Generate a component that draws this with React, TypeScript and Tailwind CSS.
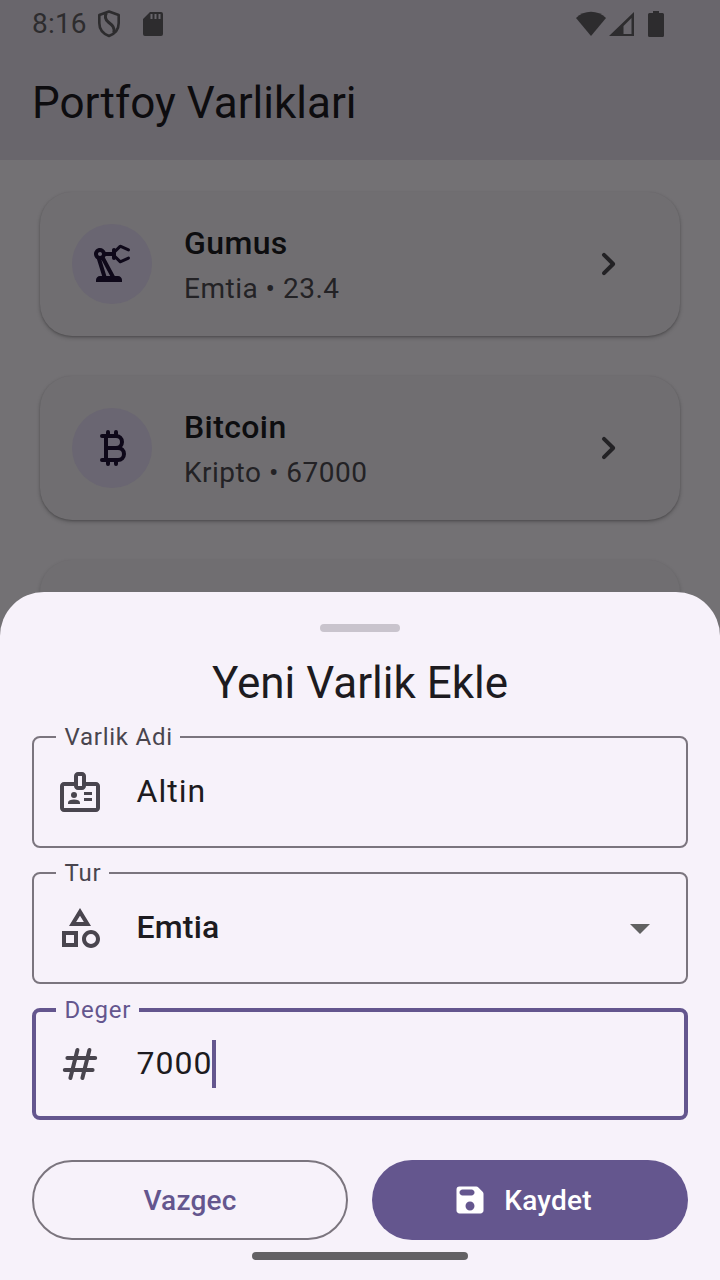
import type { ReactNode } from "react";
import {
  MdArrowDropDown,
  MdOutlineBadge,
  MdOutlineCategory,
  MdOutlinePrecisionManufacturing,
} from "react-icons/md";

function BitcoinIcon() {
  return (
    <svg viewBox="0 0 24 24" className="size-12" fill="none" stroke="currentColor" strokeWidth="2" strokeLinecap="round">
      <path d="M7 6h7a3 3 0 0 1 0 6H9M9 12h6a3 3 0 0 1 0 6H7M9 6v12M10 4v2M14 4v2M10 18v2M14 18v2" />
    </svg>
  );
}

function ChevronIcon() {
  return (
    <svg viewBox="0 0 24 24" className="size-12 text-[#232225]" fill="currentColor">
      <path d="M9.29 15.88 13.17 12 9.29 8.12a.996.996 0 1 1 1.41-1.41l4.59 4.59c.39.39.39 1.02 0 1.41L10.7 17.3a.996.996 0 0 1-1.41 0c-.38-.39-.39-1.03 0-1.42z" />
    </svg>
  );
}

function HashIcon() {
  return (
    <svg viewBox="0 0 24 24" className="size-12" fill="none" stroke="currentColor" strokeWidth="2" strokeLinecap="round">
      <path d="M5.7 9h13.9M4.4 15h13.9M10.7 5 7.2 19M16.7 5l-3.500 14" />
    </svg>
  );
}

function SaveIcon() {
  return (
    <svg viewBox="0 0 24 24" className="size-9" fill="currentColor">
      <path d="M17.59 3.59c-.38-.38-.89-.59-1.42-.59H5a2 2 0 0 0-2 2v14c0 1.1.9 2 2 2h14c1.1 0 2-.9 2-2V7.83c0-.53-.21-1.04-.59-1.41l-2.82-2.83zM12 19c-1.66 0-3-1.34-3-3s1.34-3 3-3 3 1.34 3 3-1.34 3-3 3zm1-10H7c-1.1 0-2-.9-2-2s.9-2 2-2h6c1.1 0 2 .9 2 2s-.9 2-2 2z" />
    </svg>
  );
}

function StatusBar() {
  return (
    <div className="flex h-12 items-center pl-8 pr-14 text-[#2d2c2e]">
      <span className="w-[65px] text-[28px] leading-[48px] tracking-[0.2px]">8:16</span>
      <svg viewBox="0 0 24 28" className="h-7 w-6" fill="none" stroke="currentColor" strokeWidth="2.6" strokeLinejoin="round">
        <path d="M12 1.600 2.300 5v8c0 6 3.900 10.800 9.700 13 5.800-2.200 9.700-7 9.700-13V5z" />
        <path d="M9.300 3C7.600 6.500 8 9.600 11.500 12.300c4.200 3.200 6.300 5.200 5.300 10.200" strokeWidth="3" />
      </svg>
      <svg viewBox="0 0 20 24" className="ml-[22px] h-6 w-5" fill="currentColor" fillRule="evenodd">
        <path d="M7 0h11a2 2 0 0 1 2 2v20a2 2 0 0 1-2 2H2a2 2 0 0 1-2-2V7zM7.500 2v5h2V2zM11.500 2v5h2V2zM15.500 2v5h2V2z" />
      </svg>
      <div className="flex-1" />
      <svg viewBox="0 0 88 26" className="h-[26px] w-[88px]" fill="currentColor" fillRule="evenodd">
        <path d="M0 7C8-1.400 22-1.400 30 7L15 25z" />
        <path d="M58 1v24H33zM55.500 7 47.500 15v8h8z" />
        <path d="M77 0h6v2h3.500A1.500 1.500 0 0 1 88 3.500v21a1.500 1.500 0 0 1-1.500 1.500h-13a1.500 1.500 0 0 1-1.500-1.500v-21A1.500 1.500 0 0 1 73.500 2H77z" />
      </svg>
    </div>
  );
}

function AssetCard({ icon, title, detail }: { icon: ReactNode; title: string; detail: string }) {
  return (
    <div className="flex h-36 items-center rounded-[32px] bg-[#706e71] pl-8 pr-12 shadow-[0_2px_4px_0_rgba(0,0,0,0.2),0_1px_2px_0_rgba(0,0,0,0.18)]">
      <div className="flex size-20 items-center justify-center rounded-full bg-[#6a6672] text-[#0e0819]">{icon}</div>
      <div className="ml-8 flex-1 pt-0.5">
        <div className="-mt-px text-[32px] font-medium leading-[46px] tracking-[0.4px] text-[#0d0d0f]">{title}</div>
        <div className="mt-[3px] text-[28px] leading-10 tracking-[0.5px] text-[#232225]">{detail}</div>
      </div>
      <ChevronIcon />
    </div>
  );
}

function Field({
  label,
  icon,
  focused = false,
  children,
}: {
  label: string;
  icon: ReactNode;
  focused?: boolean;
  children: ReactNode;
}) {
  return (
    <div
      className={
        focused
          ? "relative flex h-28 items-center rounded-lg border-4 border-[#64568e] pl-5 pr-5"
          : "relative flex h-28 items-center rounded-lg border-2 border-[#7b757e] pl-[22px] pr-[22px]"
      }
    >
      <span
        className={
          focused
            ? "absolute -top-[18px] left-5 bg-[#f7f2fa] pl-[8.5px] pr-[7.5px] text-2xl leading-8 tracking-[0.75px] text-[#64568e]"
            : "absolute -top-[17px] left-[22px] bg-[#f7f2fa] pl-[8.5px] pr-[7.5px] text-2xl leading-8 tracking-[0.75px] text-[#49454e]"
        }
      >
        {label}
      </span>
      <span className="text-[#49454e]">{icon}</span>
      <div className="ml-8 flex flex-1 items-center text-[32px] leading-[48px] text-[#1d1b20]">{children}</div>
    </div>
  );
}

export default function App() {
  return (
    <div className="relative h-[1280px] w-[720px] overflow-hidden bg-[#737174] font-['Roboto',sans-serif]">
      <header className="h-40 bg-[#69666c]">
        <StatusBar />
        <h1 className="px-8 pt-[27px] text-[44px] leading-[56px] text-[#0d0c0f]">Portfoy Varliklari</h1>
      </header>
      <main className="flex flex-col gap-10 px-10 pt-8">
        <AssetCard icon={<MdOutlinePrecisionManufacturing className="size-12" />} title="Gumus" detail="Emtia • 23.4" />
        <AssetCard icon={<BitcoinIcon />} title="Bitcoin" detail="Kripto • 67000" />
        <div className="h-36 rounded-[32px] bg-[#706e71] shadow-[0_2px_4px_0_rgba(0,0,0,0.2)]" />
      </main>

      <section className="absolute inset-x-0 bottom-0 flex h-[688px] flex-col rounded-t-[44px] bg-[#f7f2fa] px-8">
        <div className="mx-auto mt-8 h-2 w-20 rounded-full bg-[#c9c4cd]" />
        <h2 className="mt-[23px] text-center text-[44px] leading-[56px] text-[#1d1b20]">Yeni Varlik Ekle</h2>
        <div className="mt-[25px] flex flex-col gap-6">
          <Field label="Varlik Adi" icon={<MdOutlineBadge className="size-12" />}>
            <span className="pb-0.5 pl-[0.5px] tracking-[1px]">Altin</span>
          </Field>
          <Field label="Tur" icon={<MdOutlineCategory className="size-12" />}>
            <span className="flex-1 pb-0.5 pl-[0.5px] font-medium tracking-[0.2px]">Emtia</span>
            <MdArrowDropDown className="size-12 text-[#616161]" />
          </Field>
          <Field label="Deger" focused icon={<HashIcon />}>
            <span className="-mr-[0.5px] pb-0.5 pl-[0.5px] tracking-[1px]">7000</span>
            <span className="h-12 w-1 bg-[#64568e]" />
          </Field>
        </div>
        <div className="mt-10 grid grid-cols-2 gap-6 text-[28px] font-medium leading-10 tracking-[0.2px]">
          <button className="h-20 rounded-full border-2 border-[#7b757e] pt-0.5 text-[#64568e]">Vazgec</button>
          <button className="flex h-20 items-center justify-center gap-4 rounded-full bg-[#64568e] pr-4 text-white">
            <SaveIcon />
            <span className="pt-0.5">Kaydet</span>
          </button>
        </div>
        <div className="mx-auto mt-3 h-2 w-[216px] rounded-full bg-[#636164]" />
      </section>
    </div>
  );
}
